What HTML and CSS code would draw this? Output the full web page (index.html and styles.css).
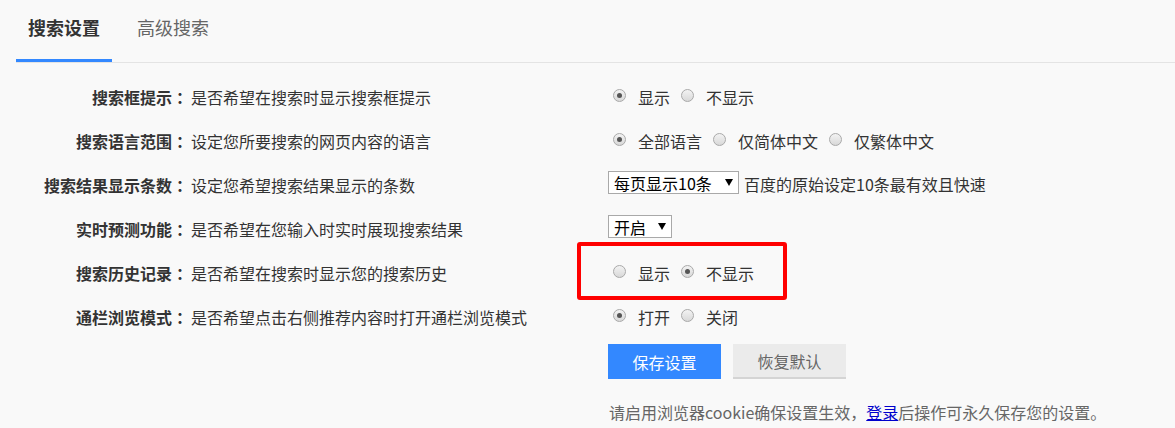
FILE: index.html
```
<!DOCTYPE html>
<html lang="zh-CN">
<head>
    <meta charset="UTF-8">
    <title>搜索设置</title>
    <link rel="stylesheet" href="styles.css">
</head>
<body>
    <div class="tabs">
        <a class="tab active">搜索设置</a>
        <a class="tab">高级搜索</a>
    </div>

    <div class="settings">
        <div class="label">搜索框提示<span class="colon">：</span></div>
        <div class="desc">是否希望在搜索时显示搜索框提示</div>
        <div class="control">
            <span class="radio checked"></span><span class="opt">显示</span>
            <span class="radio"></span><span class="opt">不显示</span>
        </div>

        <div class="label">搜索语言范围<span class="colon">：</span></div>
        <div class="desc">设定您所要搜索的网页内容的语言</div>
        <div class="control">
            <span class="radio checked"></span><span class="opt">全部语言</span>
            <span class="radio"></span><span class="opt">仅简体中文</span>
            <span class="radio"></span><span class="opt">仅繁体中文</span>
        </div>

        <div class="label">搜索结果显示条数<span class="colon">：</span></div>
        <div class="desc">设定您希望搜索结果显示的条数</div>
        <div class="control">
            <span class="select select-wide">每页显示10条<span class="arrow"></span></span>
            <span class="hint">百度的原始设定10条最有效且快速</span>
        </div>

        <div class="label">实时预测功能<span class="colon">：</span></div>
        <div class="desc">是否希望在您输入时实时展现搜索结果</div>
        <div class="control">
            <span class="select">开启<span class="arrow"></span></span>
        </div>

        <div class="label">搜索历史记录<span class="colon">：</span></div>
        <div class="desc">是否希望在搜索时显示您的搜索历史</div>
        <div class="control highlight-row">
            <span class="radio"></span><span class="opt">显示</span>
            <span class="radio checked"></span><span class="opt">不显示</span>
            <div class="highlight"></div>
        </div>

        <div class="label">通栏浏览模式<span class="colon">：</span></div>
        <div class="desc">是否希望点击右侧推荐内容时打开通栏浏览模式</div>
        <div class="control">
            <span class="radio checked"></span><span class="opt">打开</span>
            <span class="radio"></span><span class="opt">关闭</span>
        </div>

        <div class="actions">
            <button class="btn btn-save">保存设置</button>
            <button class="btn btn-reset">恢复默认</button>
        </div>

        <div class="notice">请启用浏览器cookie确保设置生效，<a href="#">登录</a>后操作可永久保存您的设置。</div>
    </div>
</body>
</html>
```

FILE: styles.css
```
/* Reset */
* {
    margin: 0;
    padding: 0;
    box-sizing: border-box;
}

body {
    font-family: "Noto Sans CJK SC", "Noto Sans", sans-serif;
    font-size: 16px;
    color: #333;
    background-color: #f9f9f9;
}

/* Tabs */
.tabs {
    display: flex;
    gap: 13px;
    margin-left: 16px;
    border-bottom: 1px solid #e4e4e4;
}

.tab {
    padding: 15px 12px 20px;
    font-size: 18px;
    line-height: 24px;
    color: #666;
    border-bottom: 3px solid transparent;
}

.tab.active {
    font-weight: bold;
    color: #333;
    border-bottom-color: #3388ff;
}

/* Settings grid */
.settings {
    display: grid;
    grid-template-columns: 172px 419px 1fr;
    grid-auto-rows: 44px;
    margin-top: 12px;
    margin-left: 16px;
}

.label,
.desc,
.control {
    display: flex;
    align-items: center;
    line-height: 24px;
}

.label {
    justify-content: flex-end;
    font-weight: bold;
}

/* centred full-width colon, as in the original font */
.colon {
    font-family: "Noto Sans CJK TC", sans-serif;
}

.desc {
    padding-left: 3px;
}

.control {
    padding-left: 1px;
}

/* Radios */
.radio {
    width: 13px;
    height: 13px;
    margin: 0 12px 3px 5px;
    border: 1px solid #a9a9a9;
    border-radius: 50%;
    background: linear-gradient(#f3f3f3, #d8d8d8);
    position: relative;
}

.radio.checked::after {
    content: "";
    position: absolute;
    left: 3px;
    top: 3px;
    width: 5px;
    height: 5px;
    border-radius: 50%;
    background-color: #555;
}

.opt {
    margin-right: 6px;
}

/* Selects */
.select {
    display: flex;
    align-items: center;
    width: 64px;
    height: 23px;
    margin-bottom: 5px;
    padding-left: 5px;
    border: 1px solid #a9a9a9;
    background-color: #fff;
    color: #000;
}

.select-wide {
    width: 131px;
}

.arrow {
    margin-left: auto;
    margin-right: 5px;
    width: 0;
    height: 0;
    border-left: 4px solid transparent;
    border-right: 4px solid transparent;
    border-top: 7px solid #000;
}

.hint {
    margin-left: 5px;
    margin-bottom: 3px;
}

/* Red annotation box */
.highlight-row {
    position: relative;
}

.highlight {
    position: absolute;
    left: -30px;
    top: -9px;
    width: 210px;
    height: 58px;
    border: 4px solid #ff0000;
    border-radius: 3px;
}

/* Buttons */
.actions {
    grid-column: 3;
    display: flex;
    gap: 12px;
    padding-left: 1px;
    padding-top: 5px;
}

.btn {
    width: 113px;
    height: 35px;
    font-family: inherit;
    font-size: 16px;
    border: none;
    cursor: pointer;
}

.btn-save {
    background-color: #3388ff;
    color: #fff;
}

.btn-reset {
    background-color: #ebebeb;
    color: #666;
    border-bottom: 2px solid #d4d4d4;
}

/* Notice */
.notice {
    grid-column: 3;
    padding-left: 2px;
    padding-top: 17px;
    color: #666;
    line-height: 24px;
    white-space: nowrap;
}

.notice a {
    color: #0000cc;
}
```
